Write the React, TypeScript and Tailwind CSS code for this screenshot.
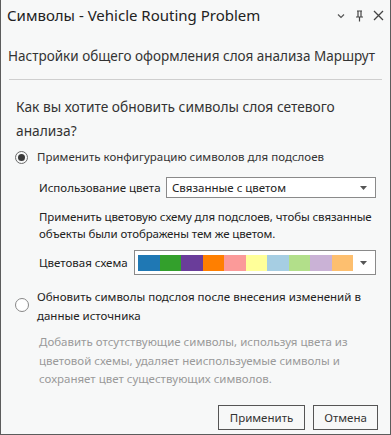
import React from "react";

const colors = ["#1f78b4", "#33a02c", "#6a3d9a", "#ff7f00", "#fb9a99", "#ffff99", "#a6cee3", "#b2df8a", "#cab2d6", "#fdbf6f"];

function Caret() {
  return (
    <svg width="7" height="4" viewBox="0 0 7 4" className="block shrink-0">
      <path d="M0 0h7L3.5 4z" fill="#555" />
    </svg>
  );
}

export default function App() {
  return (
    <div
      className="w-[391px] h-[435px] bg-[#f7f8f8] border-l border-r border-b border-[#5c5c5c] flex flex-col text-[#333] overflow-hidden"
      style={{ fontFamily: '"Noto Sans", "Open Sans", sans-serif' }}
    >
      {/* Title bar */}
      <div className="h-[31px] shrink-0 flex items-center pl-[6px] pr-[6px]">
        <div className="text-[15px] text-[#222] flex-1 leading-none whitespace-nowrap">Символы - Vehicle Routing Problem</div>
        <div className="flex items-center text-[#444]">
          <svg width="8" height="6" viewBox="0 0 8 6" className="block"><path d="M1 1.5l3 3 3-3" stroke="#555" strokeWidth="1.2" fill="none" /></svg>
          <svg width="9" height="12" viewBox="0 0 9 12" className="block ml-[10px]"><path d="M2 1h5M3 1v6M6 1v6M1 7h7M4.5 7v4.5" stroke="#444" strokeWidth="1.2" fill="none" /></svg>
          <svg width="11" height="11" viewBox="0 0 11 11" className="block ml-[9px]"><path d="M1 1l9 9M10 1l-9 9" stroke="#444" strokeWidth="1.3" fill="none" /></svg>
        </div>
      </div>
      {/* subtitle */}
      <div className="shrink-0 pl-[7px] mt-[15px] text-[13.5px] leading-[20px] text-[#333] whitespace-nowrap">Настройки общего оформления слоя анализа Маршрут</div>
      <div className="shrink-0 mx-[8px] mt-[13px] h-px bg-[#cfcfcf]" />
      {/* body */}
      <div className="shrink-0 pl-[15px] pr-[14px]">
        <div className="mt-[15px] text-[13.75px] leading-[24px] text-[#333]">Как вы хотите обновить символы слоя сетевого анализа?</div>
        <div className="mt-[5px] flex items-center h-[18px]">
          <div className="w-[13px] h-[13px] rounded-full border border-[#6b6b6b] flex items-center justify-center ml-[-1px]">
            <div className="w-[7px] h-[7px] rounded-full bg-[#3a3a3a]" />
          </div>
          <div className="ml-[9px] text-[11.5px] leading-[18px] text-[#333] whitespace-nowrap">Применить конфигурацию символов для подслоев</div>
        </div>
        <div className="pl-[23px]">
          <div className="mt-[11px] flex items-center h-[21px]">
            <div className="w-[127px] text-[11.5px] text-[#222] whitespace-nowrap">Использование цвета</div>
            <div className="flex-1 h-[21px] border border-[#8a8a8a] bg-white flex items-center pl-[5px] pr-[8px]">
              <span className="flex-1 text-[11.5px] text-[#222] whitespace-nowrap">Связанные с цветом</span>
              <Caret />
            </div>
          </div>
          <div className="mt-[10px] text-[11.5px] leading-[17px] text-[#222] mr-[-8px] tracking-[-0.1px]">
            Применить цветовую схему для подслоев, чтобы связанные
            <br />
            объекты были отображены тем же цветом.
          </div>
          <div className="mt-[8px] flex items-center h-[25px]">
            <div className="w-[95px] text-[11.5px] text-[#222] whitespace-nowrap">Цветовая схема</div>
            <div className="flex-1 h-[25px] border border-[#8a8a8a] bg-white flex items-center pl-[3px] pr-[8px]">
              <div className="flex h-[16px]">
                {colors.map((c) => (
                  <div key={c} className="w-[21.5px] h-full" style={{ background: c }} />
                ))}
              </div>
              <div className="flex-1" />
              <Caret />
            </div>
          </div>
        </div>
        <div className="mt-[12px] flex items-start">
          <div className="w-[14px] h-[14px] rounded-full border border-[#888] bg-white mt-[11px] ml-[-1px] shrink-0" />
          <div className="ml-[8px] text-[11.5px] leading-[19px] text-[#222] pr-[10px]">
            Обновить символы подслоя после внесения изменений в данные источника
          </div>
        </div>
        <div className="pl-[23px] mt-[8px] text-[11.5px] leading-[18.5px] text-[#9a9a9a] pr-[20px]">
          Добавить отсутствующие символы, используя цвета из цветовой схемы, удаляет неиспользуемые символы и сохраняет цвет существующих символов.
        </div>
      </div>
      <div className="flex-1" />
      <div className="shrink-0 flex justify-end gap-[8px] pr-[12px] pb-[4px]">
        <button className="w-[87px] h-[25px] border border-[#555] bg-[#f7f8f8] text-[11.5px] text-[#333]">Применить</button>
        <button className="w-[65px] h-[25px] border border-[#555] bg-[#f7f8f8] text-[11.5px] text-[#333]">Отмена</button>
      </div>
    </div>
  );
}
